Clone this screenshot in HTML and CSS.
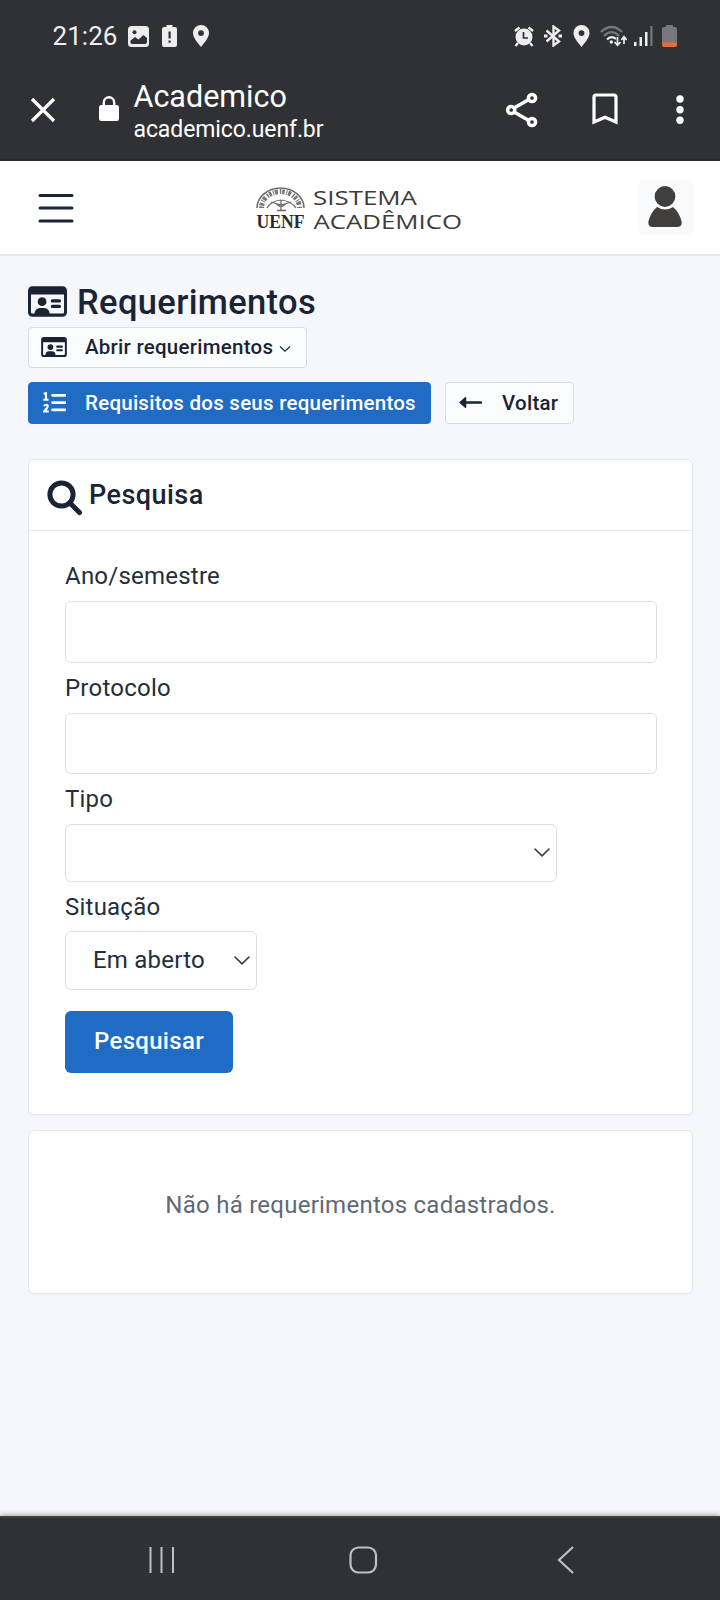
FILE: index.html
```html
<!DOCTYPE html>
<html lang="pt-BR">
<head>
<meta charset="utf-8">
<title>Academico</title>
<link rel="stylesheet" href="styles.css">
</head>
<body>
<svg width="0" height="0" class="defs">
  <symbol id="idcard" viewBox="0 0 576 448">
    <path fill-rule="evenodd" d="M64 0H512A64 64 0 0 1 576 64V384A64 64 0 0 1 512 448H64A64 64 0 0 1 0 384V64A64 64 0 0 1 64 0ZM44 120V384Q44 402 62 402H96A80 80 0 0 1 176 320H240A80 80 0 0 1 320 402H514Q532 402 532 384V120Z"/>
    <circle cx="208" cy="226" r="65"/>
    <path d="M360 192h104a24 24 0 0 1 0 48H360a24 24 0 0 1 0-48zM360 272h104a24 24 0 0 1 0 48H360a24 24 0 0 1 0-48z"/>
  </symbol>
  <symbol id="pin" viewBox="0 0 16 22">
    <path fill-rule="evenodd" d="M8 0a8 8 0 0 1 8 8c0 5-5 10-8 14C5 18 0 13 0 8a8 8 0 0 1 8-8zm0 5.200a2.900 2.900 0 1 0 0 5.800a2.900 2.900 0 0 0 0-5.800z"/>
  </symbol>
</svg>
<div class="phone">
  <div class="status">
    <span class="time">21:26</span>
    <svg class="s-img" width="21" height="21" viewBox="0 0 21 21"><rect width="21" height="21" rx="3.500" fill="#ededf0"/><circle cx="6.500" cy="6.300" r="2" fill="#303135"/><path d="M2.500 17.500v-3l4.500-3.500 3.500 2.500 5-4.500 3.500 3v4q0 2-2 2H4.500q-2 0-2-1z" fill="#303135"/></svg>
    <svg class="s-warn" width="15" height="22" viewBox="0 0 15 22"><path d="M4.500 0h6v2H13q2 0 2 2v16q0 2-2 2H2q-2 0-2-2V4q0-2 2-2h2.500z" fill="#ededf0"/><path d="M6.500 6.500h2.200v7H6.500zM6.500 15.500h2.200v2.200H6.500z" fill="#303135"/></svg>
    <svg class="s-pin" width="16" height="22"><use href="#pin"/></svg>
    <div class="status-right">
      <svg width="20" height="21" viewBox="0 0 20 21"><circle cx="10" cy="11" r="8.500" fill="#ededf0"/><path d="M1 5L5.500 1.500M19 5L14.500 1.500M4 17L1.500 20M16 17l2.500 3" stroke="#ededf0" stroke-width="2.400" fill="none"/><path d="M9.500 6v6h4.500" stroke="#303135" stroke-width="1.700" fill="none"/></svg>
      <svg class="s-bt" width="18" height="22" viewBox="0 0 18 22" fill="none" stroke="#ededf0" stroke-width="2.400"><path d="M2.500 5.500L15 16.500L9.500 20.500V1.500L15 5.500L2.500 16.500"/><path d="M0 11h3.500M14.500 11H18" stroke-width="3"/></svg>
      <svg class="s-pin2" width="17" height="22"><use href="#pin"/></svg>
      <svg class="s-wifi" width="27" height="22" viewBox="0 0 27 22" fill="none"><path d="M1 7Q11.500-3 22 7M4 11Q11.500 3.500 19 11" stroke="#77787c" stroke-width="2.200"/><path d="M7 14.500Q11.500 10 16 14" stroke="#ededf0" stroke-width="2.200"/><circle cx="11.300" cy="17" r="1.700" fill="#ededf0"/><path d="M17.500 12v8M14.500 17l3 3.300 3-3.300M24 19v-7M21.300 15l2.700-3.300 2.700 3.300" stroke="#ededf0" stroke-width="1.700"/></svg>
      <svg class="s-signal" width="19" height="21" viewBox="0 0 19 21"><path d="M0 16h2.500v4H0zM5.500 11H8v9H5.500zM11 6h2.500v14H11z" fill="#ededf0"/><path d="M16.300 0h2.200v20h-2.200z" fill="#77787c"/></svg>
      <svg class="s-batt" width="15" height="22" viewBox="0 0 15 22"><path d="M4 0h7v2h2q2 0 2 2v14H0V4q0-2 2-2h2z" fill="#77787c"/><path d="M0 17.500h15V20q0 2-2 2H2q-2 0-2-2z" fill="#e8693c"/></svg>
    </div>
  </div>
  <div class="browser">
    <svg class="b-close" width="26" height="26" viewBox="0 0 26 26" stroke="#fff" stroke-width="3.200" fill="none"><path d="M2 2L24 24M24 2L2 24"/></svg>
    <svg class="b-lock" width="20" height="26" viewBox="0 0 20 26"><rect y="9" width="20" height="16" rx="2.300" fill="#fff"/><path d="M4.800 10V6.500a5.200 5.200 0 0 1 10.400 0V10" fill="none" stroke="#fff" stroke-width="2.400"/></svg>
    <div class="b-title">
      <span class="b-name">Academico</span>
      <span class="b-url">academico.uenf.br</span>
    </div>
    <svg class="b-share" width="34" height="36" viewBox="0 0 34 36" fill="none" stroke="#fff" stroke-width="3.500"><path d="M9 16L23 8M9 20L23 28"/><circle cx="6.200" cy="18" r="3.600"/><circle cx="27" cy="6" r="3.600"/><circle cx="27" cy="30" r="3.600"/></svg>
    <svg class="b-mark" width="26" height="32" viewBox="0 0 26 32" fill="none" stroke="#fff" stroke-width="3.200"><path d="M2 29V4Q2 2 4 2H22Q24 2 24 4V29L13 24.200Z"/></svg>
    <svg class="b-dots" width="8" height="30" viewBox="0 0 8 30" fill="#fff"><circle cx="4" cy="4" r="3.700"/><circle cx="4" cy="14.700" r="3.700"/><circle cx="4" cy="25.300" r="3.700"/></svg>
  </div>
  <header class="topbar">
    <svg class="menu" width="36" height="30" viewBox="0 0 36 30" stroke="#1b2434" stroke-width="3" stroke-linecap="round"><path d="M2 2.500H34M2 15H34M2 28H34"/></svg>
    <svg class="logo" width="210" height="64" viewBox="255 175 210 64">
      <g fill="none" stroke="#6a6a6a">
        <path d="M257 207A23.500 20 0 0 1 304 207" stroke-width="1.500"/>
        <path d="M261.500 207A18.500 16 0 0 1 299.500 207" stroke-width="5" stroke-dasharray="1.500 1 2.500 1.500 1 1 3 2" stroke="#777"/>
        <path d="M267 207Q271 200 281 199Q291 200 296 207" stroke-width="1.200"/>
        <path d="M281 199V209M277 209.500H286M276 203L281 206L286 203M271 201L281 204L291 201" stroke-width="1.300"/>
      </g>
      <text class="uenf" x="256.500" y="227" textLength="48" lengthAdjust="spacingAndGlyphs">UENF</text>
      <text class="sistema" x="313" y="203.800" textLength="104" lengthAdjust="spacingAndGlyphs">SISTEMA</text>
      <text class="sistema" x="313.500" y="228.300" textLength="148.500" lengthAdjust="spacingAndGlyphs">ACADÊMICO</text>
    </svg>
    <div class="avatar"><svg width="34" height="42" viewBox="0 0 34 42" fill="#403f3e"><path d="M9 21Q17 26 25 21Q31 26 33.500 35Q34.500 41 29 41H5Q-.5 41 .5 35Q3 26 9 21Z"/><circle cx="17" cy="10.500" r="11" stroke="#f8fafc" stroke-width="1.200"/></svg></div>
  </header>
  <main>
    <h1><svg width="39" height="31"><use href="#idcard"/></svg>Requerimentos</h1>
    <div class="actions">
      <button class="btn open"><svg class="card-icon" width="26" height="20"><use href="#idcard"/></svg><span>Abrir requerimentos</span><svg class="caret" width="12" height="8" viewBox="0 0 12 8" fill="none" stroke="#1e293b" stroke-width="1.300"><path d="M1 1.500L6 6.200L11 1.500"/></svg></button>
      <button class="btn primary"><svg class="list-icon" width="23" height="21" viewBox="0 0 23 21"><path d="M9.500 3.300H22M9.500 10.600H22M9.500 17.800H22" stroke="#fff" stroke-width="2.700" stroke-linecap="round"/><path d="M.7 2L3 1V7.500M.3 7.800H5.500M.8 14Q3 11.800 4.700 13.500Q5.300 15.200 1 19.500H5.800" fill="none" stroke="#fff" stroke-width="2.100"/></svg><span>Requisitos dos seus requerimentos</span></button>
      <button class="btn back"><svg class="arrow" width="23" height="13" viewBox="0 0 23 13"><path d="M5 6.500H22" stroke="#1b2434" stroke-width="2.600" stroke-linecap="round"/><path d="M1 6.500L6.500 1.700V11.300Z" fill="#1b2434" stroke="#1b2434" stroke-width="1.500" stroke-linejoin="round"/></svg><span>Voltar</span></button>
    </div>
    <section class="card search">
      <h2><svg width="36" height="36" viewBox="0 0 36 36" fill="none" stroke="#1b2434"><circle cx="14.500" cy="14.500" r="11.600" stroke-width="5"/><path d="M23.500 23.500L32.500 32.500" stroke-width="5" stroke-linecap="round"/></svg><span>Pesquisa</span></h2>
      <form>
        <label>Ano/semestre</label>
        <div class="field"></div>
        <label>Protocolo</label>
        <div class="field"></div>
        <label>Tipo</label>
        <div class="select type"><svg width="16" height="9" viewBox="0 0 16 9" fill="none" stroke="#343a40" stroke-width="1.600" stroke-linecap="round"><path d="M1 1L8 7.800L15 1"/></svg></div>
        <label>Situação</label>
        <div class="select state"><span>Em aberto</span><svg width="16" height="9" viewBox="0 0 16 9" fill="none" stroke="#343a40" stroke-width="1.600" stroke-linecap="round"><path d="M1 1L8 7.800L15 1"/></svg></div>
        <button type="button" class="submit">Pesquisar</button>
      </form>
    </section>
    <section class="card empty">Não há requerimentos cadastrados.</section>
  </main>
  <nav class="sysnav">
    <svg width="26" height="28" viewBox="0 0 26 28" stroke="#bfc0c3" stroke-width="2"><path d="M1.500 1V27M12.500 1V27M24 1V27"/></svg>
    <svg width="29" height="28" viewBox="0 0 29 28" fill="none" stroke="#bfc0c3" stroke-width="2.200"><rect x="1.500" y="1.500" width="25.500" height="25" rx="8"/></svg>
    <svg width="18" height="28" viewBox="0 0 18 28" fill="none" stroke="#bfc0c3" stroke-width="2.200"><path d="M16 1L2 14L16 27"/></svg>
  </nav>
</div>
</body>
</html>
```

FILE: styles.css
```css
* { box-sizing: border-box; }
body { margin: 0; font-family: Roboto, "Liberation Sans", sans-serif; color: #242e3d; }
svg { display: block; flex: none; }
.defs { position: absolute; }
.phone { width: 720px; height: 1600px; display: flex; flex-direction: column; background: #f5f7fb; overflow: hidden; }

.status { height: 72px; flex: none; background: #303135; color: #ededf0; display: flex; align-items: center; padding-left: 52.500px; }
.status use { fill: #ededf0; }
.time { font-size: 26px; letter-spacing: .05px; width: 75.500px; line-height: 72px; }
.s-warn { margin-left: 13px; }
.s-pin { margin-left: 16px; }
.status-right { margin-left: auto; padding-right: 43px; display: flex; align-items: center; }
.s-bt { margin-left: 10px; }
.s-pin2 { margin-left: 11px; }
.s-wifi { margin-left: 10px; }
.s-signal { margin-left: 7px; }
.s-batt { margin-left: 9px; }

.browser { height: 89px; flex: none; background: #303135; color: #fff; display: flex; align-items: flex-start; padding-left: 29.500px; border-bottom: 2px solid #29282b; }
.b-close { margin-top: 24.500px; }
.b-lock { margin: 24px 0 0 43.500px; }
.b-title { margin-left: 14.500px; margin-top: 7px; width: 371.500px; display: flex; flex-direction: column; }
.b-name { font-size: 30.500px; line-height: 36px; }
.b-url { font-size: 23px; line-height: 30px; letter-spacing: -.1px; }
.b-share { margin-top: 20px; }
.b-mark { margin: 21px 0 0 53px; }
.b-dots { margin: 23px 0 0 58px; }

.topbar { height: 95px; flex: none; background: #fff; border-bottom: 2px solid #e6e8ec; display: flex; align-items: center; padding: 0 0 0 38px; }
.logo { margin-left: 181px; }
.uenf { font-family: "Liberation Serif", serif; font-weight: 700; font-size: 19px; fill: #2b2b2b; }
.sistema { font-family: "Open Sans", sans-serif; font-size: 20.500px; fill: #3c3c3c; }
.avatar { margin-left: 173px; width: 55px; height: 55px; border-radius: 6px; background: #f8fafc; display: flex; align-items: center; justify-content: center; padding: 0 1px 1px 0; }

main { flex: 1; padding: 22px 27px 0 28px; }
h1 { margin: 0; height: 49px; display: flex; align-items: center; gap: 10px; padding-bottom: 2px; font-size: 34.500px; font-weight: 500; line-height: 42px; letter-spacing: .35px; color: #1b2434; }
h1 svg, .card-icon { fill: #1b2434; }
h1 svg { margin-bottom: 1px; }
.actions { display: flex; flex-wrap: wrap; gap: 14px; }
.btn { font: 500 20.500px/24px Roboto, sans-serif; letter-spacing: .25px; color: #1b2434; background: #fbfcfe; border: 1px solid #d9dce3; border-radius: 4px; height: 42px; padding: 0; display: flex; align-items: center; white-space: nowrap; }
.open { width: 279px; height: 41px; padding: 0 0 1px 12px; margin-right: 300px; }
.open span { margin-left: 18px; }
.caret { margin: 4px 0 0 6px; }
.primary { width: 403px; background: #206bc4; color: #fff; border-color: #206bc4; padding-left: 14px; }
.list-icon { margin-bottom: 2px; }
.primary span { margin-left: 19px; }
.back { width: 129px; padding-left: 13px; }
.arrow { margin-bottom: 2px; }
.back span { margin-left: 20px; }

.card { background: #fff; border: 1px solid #e4e7ed; border-radius: 6px; box-shadow: 0 1px 3px rgba(30, 41, 59, .04); }
.search { margin-top: 35px; height: 656px; }
h2 { margin: 0; height: 71px; border-bottom: 1px solid #e4e6ea; display: flex; padding-left: 17.500px; font-size: 27px; font-weight: 500; letter-spacing: .45px; color: #1b2434; }
h2 svg { margin-top: 20px; }
h2 span { margin-left: 6.500px; line-height: 70px; }
form { padding: 20px 34px 0 36px; display: flex; flex-direction: column; align-items: flex-start; letter-spacing: .23px; }
label { font-size: 24px; line-height: 50px; }
.field, .select { border: 1.500px solid #dcdfe4; border-radius: 6px; background: #fff; }
.field { width: 592px; height: 61.500px; }
.select { height: 57.500px; display: flex; align-items: center; justify-content: flex-end; padding: 0 6px 1px 0; font-size: 24px; }
.type { width: 492px; }
.state { width: 192px; height: 58.500px; justify-content: space-between; padding: 0 6px 0 27px; margin-top: -.500px; }
.submit { margin-top: 21px; width: 168px; height: 62px; border: 0; border-radius: 6px; background: #206bc4; color: #fff; font: 500 24px/28px Roboto, sans-serif; letter-spacing: .3px; padding: 0 0 2px; }
.empty { margin-top: 15px; height: 164px; text-align: center; font-size: 24px; letter-spacing: .25px; line-height: 148px; color: #626976; }

.sysnav { height: 84px; flex: none; border-top: 2px solid #403c39; background: #303135; display: flex; align-items: center; padding: 2px 0 0 149px; box-shadow: 0 -2px 4px rgba(0, 0, 0, .25); }
.sysnav svg + svg { margin-left: 174px; }
.sysnav svg:last-child { margin-left: 179px; }
```
